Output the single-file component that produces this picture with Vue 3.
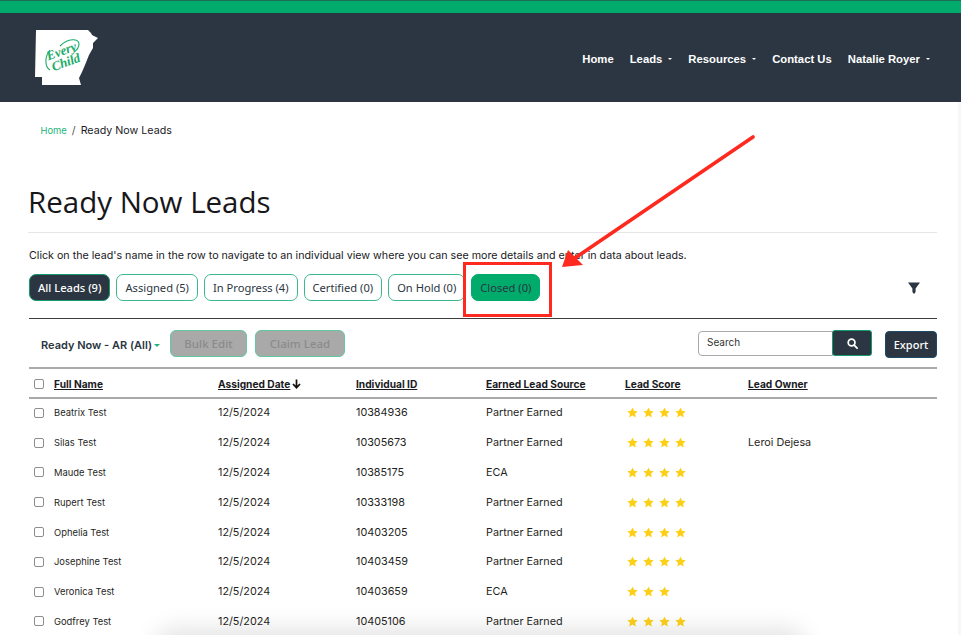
<script setup>
const tabs = [
  { label: 'All Leads (9)', kind: 'active' },
  { label: 'Assigned (5)', kind: '' },
  { label: 'In Progress (4)', kind: '' },
  { label: 'Certified (0)', kind: '' },
  { label: 'On Hold (0)', kind: '' },
  { label: 'Closed (0)', kind: 'closed' }
]
const nav = [
  { label: 'Home' },
  { label: 'Leads', caret: true },
  { label: 'Resources', caret: true },
  { label: 'Contact Us' },
  { label: 'Natalie Royer', caret: true }
]
const heads = ['Assigned Date', 'Individual ID', 'Earned Lead Source', 'Lead Score', 'Lead Owner']
const rows = [
  ['Beatrix Test', '10384936', 'Partner Earned', 4, ''],
  ['Silas Test', '10305673', 'Partner Earned', 4, 'Leroi Dejesa'],
  ['Maude Test', '10385175', 'ECA', 4, ''],
  ['Rupert Test', '10333198', 'Partner Earned', 4, ''],
  ['Ophelia Test', '10403205', 'Partner Earned', 4, ''],
  ['Josephine Test', '10403459', 'Partner Earned', 4, ''],
  ['Veronica Test', '10403659', 'ECA', 3, ''],
  ['Godfrey Test', '10405106', 'Partner Earned', 4, '']
]
</script>

<template>
  <div class="page">
    <div class="topbar"></div>
    <header class="header">
      <svg class="logo" width="66" height="58" viewBox="35 29 66 58">
        <polygon fill="#fff" points="36,30 88,30 91,33 92,35 98,38 93,43 93,48 89,55 85,65 82,72 79,78 81,85 42,85 42,77 35,77" />
        <g transform="rotate(-20 62 57)">
          <text x="48" y="55.5" class="logo-word">Every</text>
          <text x="49" y="67.5" class="logo-word">Child</text>
        </g>
        <path d="M50 70 C44 66 45 56 50 50 M60 46 C68 38 79 38 79 44 C79 47 77 50 74 52" fill="none" stroke="#1aab68" stroke-width="1.1" />
      </svg>
      <nav class="nav">
        <span v-for="n in nav" :key="n.label" class="nav-item">
          {{ n.label }}<i v-if="n.caret" class="nav-caret"></i>
        </span>
      </nav>
    </header>

    <main class="main">
      <div class="crumbs">
        <span class="crumb-home">Home</span>
        <span class="crumb-sep">/</span>
        <span class="crumb-cur">Ready Now Leads</span>
      </div>
      <h1 class="title">Ready Now Leads</h1>
      <p class="intro">Click on the lead's name in the row to navigate to an individual view where you can see more details and enter in data about leads.</p>

      <div class="tabline">
        <div class="tabs">
          <button v-for="t in tabs" :key="t.label" class="tab" :class="t.kind">{{ t.label }}</button>
        </div>
        <svg class="filter" width="12" height="12" viewBox="0 0 12 12">
          <path d="M0 .5h12L7.6 6.5V10L6 12 4.4 10V6.5z" fill="#2b3642" />
        </svg>
      </div>

      <div class="toolbar">
        <span class="view">Ready Now - AR (All)<i class="view-caret"></i></span>
        <button class="ghost bulk">Bulk Edit</button>
        <button class="ghost claim">Claim Lead</button>
        <div class="search">
          <span class="search-input">Search</span>
          <button class="search-btn" aria-label="Search">
            <svg width="11" height="11" viewBox="0 0 12 12" fill="none" stroke="#fff" stroke-width="1.9">
              <circle cx="5" cy="5" r="3.7" />
              <path d="M7.8 7.8 11 11" stroke-linecap="round" />
            </svg>
          </button>
        </div>
        <button class="export">Export</button>
      </div>

      <div class="table">
        <div class="row head">
          <span class="cell-check"><i class="box"></i></span>
          <span class="name"><u>Full Name</u></span>
          <span v-for="(h, i) in heads" :key="h" class="hcell">
            <u>{{ h }}</u>
            <svg v-if="i === 0" class="sort" width="9" height="10" viewBox="0 0 9 10">
              <path d="M4.5 .5v8M1 5l3.5 3.7L8 5" fill="none" stroke="#111" stroke-width="1.7" />
            </svg>
          </span>
        </div>
        <div v-for="r in rows" :key="r[1]" class="row body">
          <span class="cell-check"><i class="box"></i></span>
          <span class="name">{{ r[0] }}</span>
          <span>12/5/2024</span>
          <span>{{ r[1] }}</span>
          <span>{{ r[2] }}</span>
          <span class="stars">
            <svg v-for="s in r[3]" :key="s" width="11" height="11" viewBox="0 0 24 24">
              <path fill="#fdd017" d="M12 1l3.4 7.3 7.9 1-5.8 5.5 1.5 7.9L12 18.8l-7 3.9 1.5-7.9L.7 9.3l7.9-1z" />
            </svg>
          </span>
          <span>{{ r[4] }}</span>
        </div>
      </div>
    </main>

    <div class="shadow"></div>
    <div class="gutter"></div>
    <div class="redbox"></div>
    <svg class="arrow" width="961" height="635" viewBox="0 0 961 635">
      <path d="M753 137 575 258" stroke="#ff2a1f" stroke-width="3.6" fill="none" stroke-linecap="round" />
      <polygon points="562,267 583,265 568,250" fill="#ff2a1f" />
    </svg>
  </div>
</template>

<style>
html, body { margin: 0; background: #fff; overflow: hidden; }
</style>

<style scoped>
.page {
  position: relative;
  width: 961px;
  height: 635px;
  overflow: hidden;
  background: #fff;
  color: #1b1b1f;
  font-family: Inter, "Liberation Sans", sans-serif;
}
.topbar {
  height: 12px;
  background: #00ab6b;
  border-top: 1px solid #1f6b55;
}
.header {
  height: 89px;
  background: #2b3642;
  display: flex;
  justify-content: space-between;
  padding: 16px 31px 0 35px;
  box-sizing: border-box;
}
.logo { display: block; }
.logo-word {
  font-family: "Liberation Serif", serif;
  font-style: italic;
  font-weight: 700;
  font-size: 13px;
  fill: #1aab68;
}
.nav {
  display: flex;
  gap: 16px;
  height: 28px;
  align-items: center;
  margin-top: 16px;
}
.nav-item {
  color: #fff;
  font: 700 11.3px "Liberation Sans", sans-serif;
  display: flex;
  align-items: center;
  white-space: nowrap;
}
.nav-caret {
  width: 0;
  height: 0;
  margin-left: 6px;
  border: 2.5px solid transparent;
  border-top-color: #fff;
  border-bottom: 0;
}
.main { padding: 0 24px 0 29px; }
.crumbs {
  display: flex;
  align-items: center;
  height: 16px;
  margin: 20px 0 0 11.5px;
  font-size: 10.7px;
}
.crumb-home { color: #22b37b; font-size: 9.4px; }
.crumb-sep { margin: 0 5px; color: #555; }
.crumb-cur { color: #1b1b1f; }
.title {
  margin: 43px 0 0 -1px;
  font: 400 29.5px/42px "Open Sans", sans-serif;
  color: #17171b;
  padding-bottom: 9px;
  border-bottom: 1px solid #e6e6e6;
}
.intro {
  margin: 15px 0 0;
  font-size: 10.7px;
  line-height: 16px;
  color: #202024;
  white-space: nowrap;
}
.tabline {
  display: flex;
  justify-content: space-between;
  align-items: center;
  margin-top: 10px;
  padding: 0 17px 17px 0;
  border-bottom: 1px solid #3d3d3d;
}
.tabs { display: flex; gap: 6px; }
.tab {
  height: 27px;
  padding: 0 8px;
  box-sizing: border-box;
  background: #fff;
  border: 1px solid #3cb98a;
  border-radius: 7px;
  font: 400 11.15px "Noto Sans", sans-serif;
  color: #2b3642;
  white-space: nowrap;
}
.tab.active {
  background: #2b3642;
  color: #fff;
  font-weight: 500;
  border-color: #159a6c;
}
.tab.closed {
  background: #00ab6b;
  color: #2b3642;
  border-color: #00ab6b;
}
.filter { display: block; }
.toolbar {
  display: flex;
  align-items: flex-start;
  margin-top: 11px;
  height: 37px;
  border-bottom: 2px solid #a9a9a9;
  box-sizing: content-box;
}
.view {
  margin: 7px 0 0 12px;
  font-size: 11px;
  font-weight: 600;
  line-height: 16px;
  color: #2b3642;
  display: flex;
  align-items: center;
  white-space: nowrap;
}
.view-caret {
  width: 0;
  height: 0;
  margin-left: 2px;
  border: 3px solid transparent;
  border-top-color: #22b37b;
  border-bottom: 0;
}
.ghost {
  height: 27px;
  box-sizing: border-box;
  background: #a9a9a9;
  border: 1px solid #5fc9a0;
  border-radius: 6px;
  font: 500 11.5px "Noto Sans", sans-serif;
  color: #8b8b8b;
  padding: 0;
}
.bulk { width: 77px; margin-left: 10px; }
.claim { width: 90px; margin-left: 8px; }
.search {
  display: flex;
  margin-left: auto;
  height: 26px;
}
.search-input {
  width: 135px;
  height: 25px;
  box-sizing: border-box;
  padding-left: 8px;
  border: 1px solid #aaa;
  border-radius: 4px 0 0 4px;
  font-size: 10px;
  line-height: 21px;
  color: #333;
  margin-top: 1px;
}
.search-btn {
  width: 40px;
  height: 26px;
  margin-left: -1px;
  background: #2b3642;
  border: 1px solid #159a6c;
  border-radius: 3px;
  padding: 0;
  display: flex;
  align-items: center;
  justify-content: center;
}
.export {
  width: 52px;
  height: 27px;
  margin: 1px 0 0 13px;
  box-sizing: border-box;
  background: #2b3642;
  border: 1px solid #1d4a66;
  border-radius: 4px;
  color: #fff;
  font: 500 11px "Noto Sans", sans-serif;
  padding: 0;
}
.row {
  display: grid;
  grid-template-columns: 25px 164px 138px 130px 139px 123px 1fr;
  align-items: center;
}
.head {
  height: 27px;
  padding-top: 1px;
  margin-bottom: -1px;
  border-bottom: 2px solid #a9a9a9;
  box-sizing: content-box;
  font-size: 10.2px;
  font-weight: 700;
  color: #1b1b1f;
}
.head .name { font-size: 10.2px; }
.hcell { display: flex; align-items: center; gap: 2px; white-space: nowrap; }
.sort { display: block; }
.body {
  height: 29.8px;
  font-size: 10.8px;
  color: #1f1f23;
}
.name { font-size: 9.4px; }
.cell-check { display: flex; padding-left: 5px; }
.box {
  display: block;
  width: 10px;
  height: 10px;
  box-sizing: border-box;
  border: 1px solid #8d8d8d;
  border-radius: 2px;
  background: #fff;
}
.stars { display: flex; gap: 5px; padding-left: 2px; }
.stars svg { display: block; }
.shadow {
  position: absolute;
  left: 160px;
  right: 160px;
  bottom: -30px;
  height: 30px;
  border-radius: 30px;
  box-shadow: 0 -2px 22px 6px rgba(0, 0, 0, 0.1);
  pointer-events: none;
}
.gutter {
  position: absolute;
  top: 102px;
  right: 0;
  bottom: 0;
  width: 3px;
  background: #f7f7f7;
}
.redbox {
  position: absolute;
  left: 463px;
  top: 262px;
  width: 89px;
  height: 55px;
  box-sizing: border-box;
  border: 3px solid #ff2a1f;
}
.arrow {
  position: absolute;
  inset: 0;
  pointer-events: none;
}
</style>
